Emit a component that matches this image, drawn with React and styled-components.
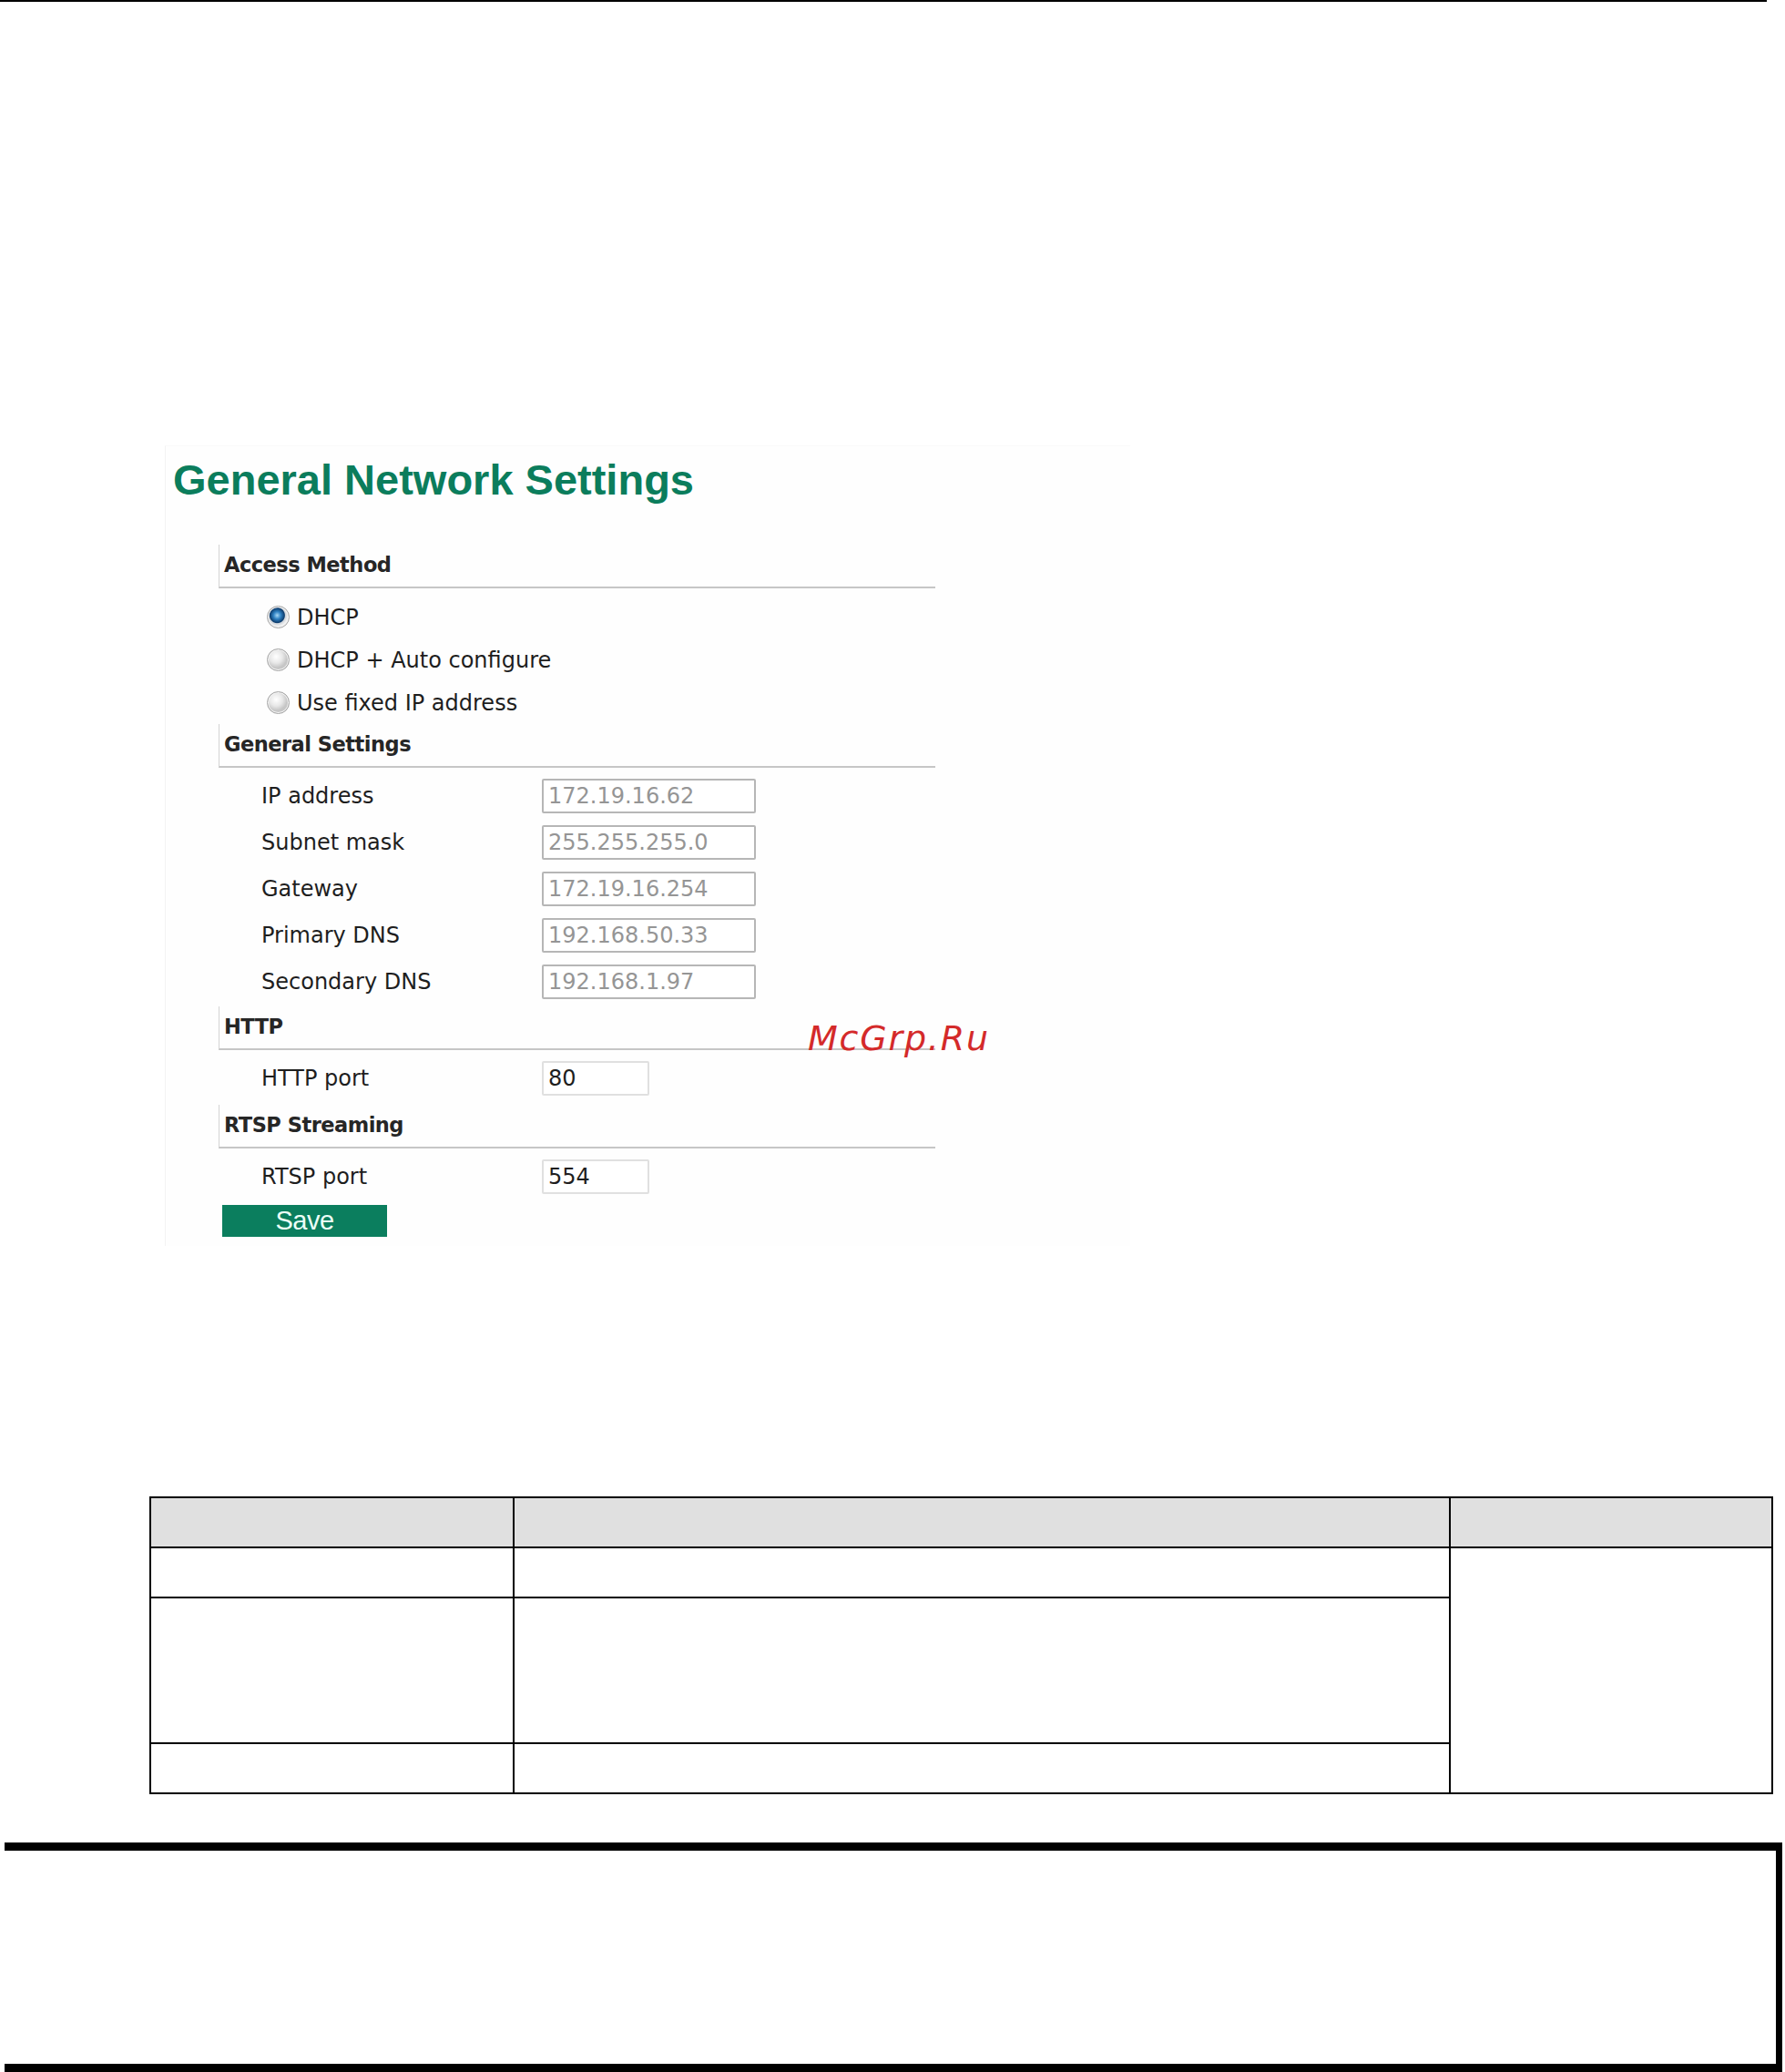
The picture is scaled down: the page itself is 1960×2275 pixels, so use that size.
import React from 'react'
import styled, { createGlobalStyle } from 'styled-components'

const GlobalStyle = createGlobalStyle`
    html, body {
        margin: 0;
        padding: 0;
        background: #fff;
    }
    body {
        font-family: "DejaVu Sans", Verdana, sans-serif;
    }
`

const fields = [
    { label: 'IP address', value: '172.19.16.62' },
    { label: 'Subnet mask', value: '255.255.255.0' },
    { label: 'Gateway', value: '172.19.16.254' },
    { label: 'Primary DNS', value: '192.168.50.33' },
    { label: 'Secondary DNS', value: '192.168.1.97' },
]

const methods = [
    { label: 'DHCP', checked: true },
    { label: 'DHCP + Auto configure', checked: false },
    { label: 'Use fixed IP address', checked: false },
]

const App = () => {
    return (
        <Page>
            <GlobalStyle />
            <TopRule />

            <Panel>
                <Title>General Network Settings</Title>

                <SectionHeader $gap={44}>Access Method</SectionHeader>
                <RadioList>
                    {methods.map((m) => (
                        <RadioRow key={m.label}>
                            <Radio $checked={m.checked} />
                            <span>{m.label}</span>
                        </RadioRow>
                    ))}
                </RadioList>

                <SectionHeader $gap={0}>General Settings</SectionHeader>
                <FieldList>
                    {fields.map((f) => (
                        <FieldRow key={f.label}>
                            <Label>{f.label}</Label>
                            <Input readOnly defaultValue={f.value} $disabled />
                        </FieldRow>
                    ))}
                </FieldList>

                <SectionHeader $gap={2}>HTTP</SectionHeader>
                <FieldList>
                    <FieldRow>
                        <Label>HTTP port</Label>
                        <Input readOnly defaultValue="80" $small />
                    </FieldRow>
                </FieldList>

                <SectionHeader $gap={4}>RTSP Streaming</SectionHeader>
                <FieldList>
                    <FieldRow>
                        <Label>RTSP port</Label>
                        <Input readOnly defaultValue="554" $small />
                    </FieldRow>
                </FieldList>

                <SaveButton>Save</SaveButton>

                <Watermark>McGrp.Ru</Watermark>
            </Panel>

            <Table>
                <colgroup>
                    <col style={{ width: 399 }} />
                    <col style={{ width: 1028 }} />
                    <col style={{ width: 354 }} />
                </colgroup>
                <tbody>
                    <Row $h={55}>
                        <HeadCell />
                        <HeadCell />
                        <HeadCell />
                    </Row>
                    <Row $h={55}>
                        <Cell />
                        <Cell />
                        <Cell rowSpan={3} />
                    </Row>
                    <Row $h={160}>
                        <Cell />
                        <Cell />
                    </Row>
                    <Row $h={55}>
                        <Cell />
                        <Cell />
                    </Row>
                </tbody>
            </Table>

            <NoteBox />
        </Page>
    )
}

export default App


const Page = styled.div`
    width: 1960px;
    height: 2275px;
    overflow: hidden;
    background: #fff;
`

const TopRule = styled.div`
    width: 1940px;
    height: 2px;
    background: #000;
`

const Panel = styled.div`
    position: relative;
    box-sizing: border-box;
    width: 1060px;
    height: 879px;
    margin: 487px 0 0 181px;
    padding: 11px 0 10px 8px;
    background: #fefefe;
    border-left: 1px solid #f3f3f3;
    border-top: 1px solid #fafafa;
`

const Title = styled.h1`
    margin: -1px 0 0;
    font-family: "Liberation Sans", Arial, sans-serif;
    font-weight: 700;
    font-size: 47px;
    line-height: 54px;
    color: #0b7d5c;
`

const SectionHeader = styled.div`
    box-sizing: border-box;
    display: flex;
    align-items: center;
    width: 787px;
    height: 48px;
    margin: ${props => props.$gap}px 0 0 50px;
    padding: 0 0 2px 5px;
    border-left: 1px solid #d4d4d4;
    border-bottom: 2px solid #c6c6c6;
    font-weight: 700;
    font-size: 22.5px;
    letter-spacing: -0.5px;
    color: #262626;
`

const RadioList = styled.div`
    padding-top: 8px;
    margin-left: 103px;
`

const RadioRow = styled.div`
    display: flex;
    align-items: center;
    gap: 8px;
    height: 47px;
    font-size: 24px;
    color: #1e1e1e;
`

const Radio = styled.span`
    box-sizing: border-box;
    width: 25px;
    height: 25px;
    border-radius: 50%;
    border: 1px solid #a4a4a4;
    background: ${props => props.$checked
        ? 'radial-gradient(circle at 45% 42%, #a8d8f5 0, #3183c4 4px, #0d3d6e 8px, #cfd4da 9px, #f2f2f2 12px)'
        : 'radial-gradient(circle at 40% 35%, #ffffff 0, #e8e8e8 7px, #c6c6c6 12px)'};
    box-shadow: inset 0 0 0 1px #f4f4f4;
`

const FieldList = styled.div`
    padding-top: 5px;
    margin-left: 97px;
`

const FieldRow = styled.div`
    display: grid;
    grid-template-columns: 308px auto;
    align-items: center;
    height: 51px;
`

const Label = styled.span`
    font-size: 24px;
    color: #1e1e1e;
`

const Input = styled.input`
    box-sizing: border-box;
    width: ${props => props.$small ? 118 : 235}px;
    height: 38px;
    margin: 0;
    padding: 0 0 0 5px;
    border: 2px solid ${props => props.$small ? '#e0e0e0' : '#b6b6b6'};
    border-radius: 2px;
    background: #fff;
    font-family: "DejaVu Sans", Verdana, sans-serif;
    font-size: 24px;
    color: ${props => props.$disabled ? '#959595' : '#1e1e1e'};
    outline: none;
`

const SaveButton = styled.button`
    display: block;
    width: 181px;
    height: 35px;
    margin: 6px 0 0 54px;
    padding: 0;
    border: none;
    background: #0b7e5e;
    font-family: "Liberation Sans", Arial, sans-serif;
    font-size: 29px;
    line-height: 35px;
    letter-spacing: -0.5px;
    color: #ecfff7;
`

const Watermark = styled.div`
    position: absolute;
    left: 705px;
    top: 628px;
    font-family: "DejaVu Sans", sans-serif;
    font-style: italic;
    font-size: 38px;
    line-height: 44px;
    letter-spacing: 1.8px;
    color: #d42a2a;
`

const Table = styled.table`
    width: 1781px;
    margin: 275px 0 0 164px;
    border-collapse: collapse;
    table-layout: fixed;
`

const Row = styled.tr`
    height: ${props => props.$h}px;
`

const Cell = styled.td`
    border: 2px solid #000;
    padding: 0;
`

const HeadCell = styled(Cell)`
    background: #e0e0e0;
`

const NoteBox = styled.div`
    width: 1945px;
    height: 234px;
    margin: 53px 0 0 5px;
    border-top: 9px solid #000;
    border-right: 7px solid #000;
    border-bottom: 9px solid #000;
`
